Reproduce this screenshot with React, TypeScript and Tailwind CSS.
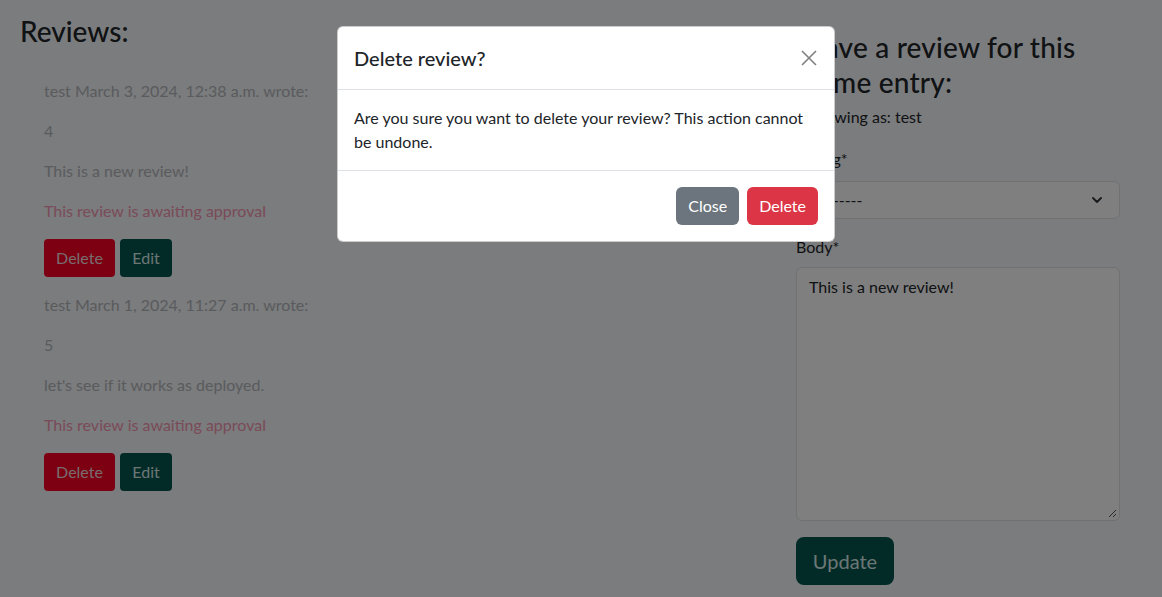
import React from "react"

const reviews = [
  { author: "test", date: "March 3, 2024, 12:38 a.m.", rating: 4, body: "This is a new review!" },
  { author: "test", date: "March 1, 2024, 11:27 a.m.", rating: 5, body: "let's see if it works as deployed." },
]

function ReviewItem({ r }: { r: (typeof reviews)[number] }) {
  return (
    <div className="pl-6 pb-4">
      <p className="mb-4 text-[#b4b6ba]">
        {r.author} {r.date} wrote:
      </p>
      <p className="mb-4 text-[#b4b6ba]">{r.rating}</p>
      <p className="mb-4 text-[#b4b6ba]">{r.body}</p>
      <p className="mb-4 text-[#f596b0]">This review is awaiting approval</p>
      <div className="flex gap-[5px]">
        <button className="h-[38px] w-[71px] rounded-[4px] bg-[#f80024] text-[#f2d8dc]">Delete</button>
        <button className="h-[38px] w-[52px] rounded-[4px] bg-[#04564e] text-[#d8ecea]">Edit</button>
      </div>
    </div>
  )
}

export default function App() {
  return (
    <div
      className="relative h-[597px] w-[1162px] overflow-hidden bg-[#f6f8fc] text-base leading-6 text-[#212529]"
      style={{ fontFamily: 'Lato, "Noto Sans", sans-serif' }}
    >
      <div className="flex">
        {/* reviews list */}
        <div className="flex-1 pl-5 pt-[14px]">
          <h3 className="mb-[31px] text-[28px] font-medium leading-[34px]">Reviews:</h3>
          {reviews.map((r) => (
            <ReviewItem key={r.date} r={r} />
          ))}
        </div>

        {/* review form */}
        <div className="mr-[42px] w-[324px] pt-[30px]">
          <h3 className="text-[28px] font-medium leading-[35px] tracking-[0.2px]">Leave a review for this anime entry:</h3>
          <p className="mt-[5px] mb-[18px]">Reviewing as: test</p>
          <label className="block mb-[10px]">Rating*</label>
          <div className="flex h-[38px] items-center justify-between rounded-[6px] border border-[#dee2e6] bg-white px-3">
            <span>---------</span>
            <svg width="16" height="16" viewBox="0 0 16 16" fill="none" stroke="#343a40" strokeWidth="2" strokeLinecap="round" strokeLinejoin="round" className="mr-[2px]">
              <path d="M4 6l4 4 4-4" />
            </svg>
          </div>
          <label className="block mt-4 mb-[8px]">Body*</label>
          <div className="relative h-[254px] rounded-[6px] border border-[#dee2e6] bg-white px-3 py-[7px]">
            This is a new review!
            <svg width="10" height="10" viewBox="0 0 10 10" className="absolute bottom-[2px] right-[2px]" stroke="#555" strokeWidth="1">
              <path d="M9 2L2 9M9 6L6 9" />
            </svg>
          </div>
          <button className="mt-4 h-[48px] w-[98px] rounded-[8px] bg-[#04564e] text-xl text-[#d8ecea]">Update</button>
        </div>
      </div>

      {/* backdrop */}
      <div className="absolute inset-0 bg-black/50" />

      {/* modal */}
      <div className="absolute left-[337px] top-[26px] w-[498px] rounded-[6px] border border-black/20 bg-white">
        <div className="flex h-[63px] items-center justify-between border-b border-[#dee2e6] px-4">
          <h5 className="text-xl font-medium leading-6">Delete review?</h5>
          <svg width="16" height="16" viewBox="0 0 16 16" stroke="#000" strokeOpacity="0.5" strokeWidth="1.6" className="mr-[1px]">
            <path d="M1 1l14 14M15 1L1 15" />
          </svg>
        </div>
        <div className="border-b border-[#dee2e6] px-4 py-4">
          Are you sure you want to delete your review? This action cannot be undone.
        </div>
        <div className="flex justify-end gap-2 px-4 py-4">
          <button className="h-[38px] rounded-[6px] bg-[#6c757d] px-3 text-white">Close</button>
          <button className="h-[38px] rounded-[6px] bg-[#dc3545] px-3 text-white">Delete</button>
        </div>
      </div>
    </div>
  )
}
